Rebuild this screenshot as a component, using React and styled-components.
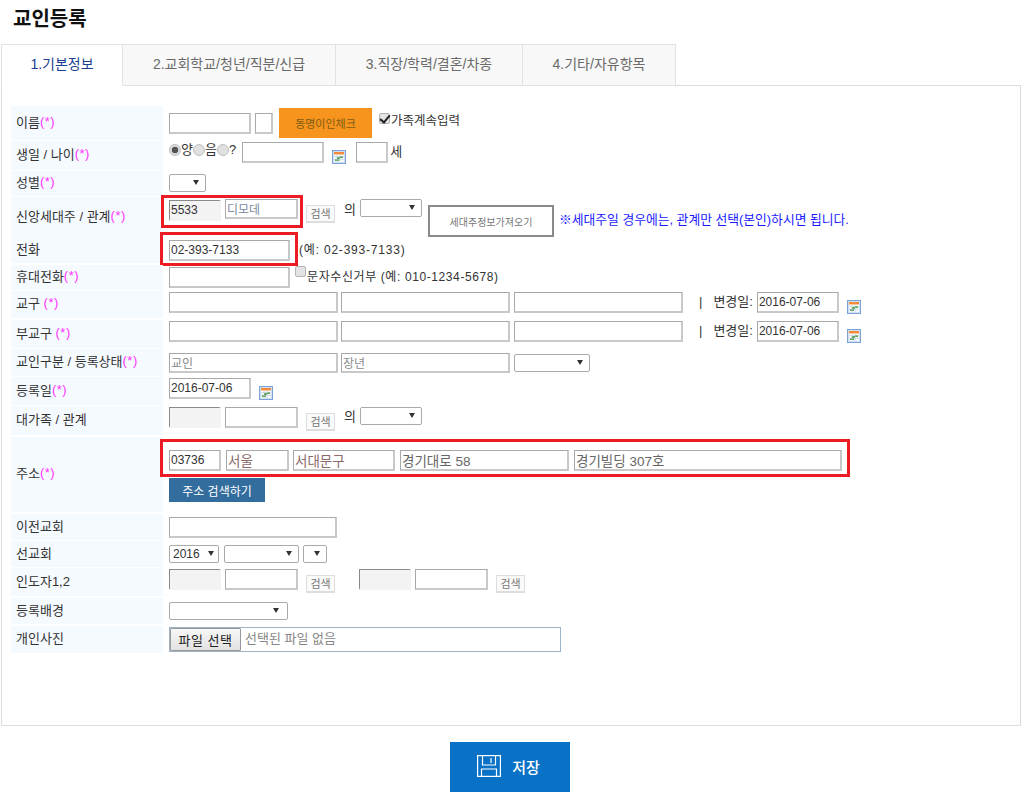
import React from "react";
import styled, { createGlobalStyle } from "styled-components";

const Global = createGlobalStyle`
  html, body { margin: 0; padding: 0; background: #fff; }
  body { font-family: "Liberation Sans", "Noto Sans CJK KR", sans-serif; font-size: 12px; color: #333; }
  * { box-sizing: border-box; }
`;

const Page = styled.div`
  width: 1024px;
  height: 797px;
  overflow: hidden;
`;
const Title = styled.h1`
  margin: 0;
  height: 44px;
  padding: 7px 0 0 13px;
  font-size: 20px;
  line-height: 24px;
  font-weight: 700;
  color: #111;
`;
const Tabs = styled.div`
  display: flex;
  height: 42px;
  padding-left: 1px;
`;
const Tab = styled.div`
  width: ${p => p.$w}px;
  height: 42px;
  border: 1px solid #e2e2e2;
  border-left-width: ${p => (p.$first ? 1 : 0)}px;
  border-bottom-color: ${p => (p.$active ? "#fff" : "#e2e2e2")};
  background: ${p => (p.$active ? "#fff" : "#f8f8f8")};
  color: ${p => (p.$active ? "#1a3f8f" : "#6a6a6a")};
  font-size: 14px;
  line-height: 39px;
  text-align: center;
  position: relative;
  z-index: 1;
`;
const Panel = styled.div`
  width: 1020px;
  height: 641px;
  margin: -1px 0 0 1px;
  border: 1px solid #dcdcdc;
  padding: 20px 0 0 9px;
`;
const Form = styled.div`
  display: flex;
  flex-direction: column;
`;
const Row = styled.div`
  position: relative;
  display: grid;
  grid-template-columns: 152px 1fr;
  height: ${p => p.$h}px;
  margin-bottom: ${p => p.$gap ?? 1}px;
`;
const Label = styled.div`
  background: #f5faff;
  padding: 0 0 4px 5px;
  display: flex;
  align-items: center;
  font-size: 13px;
  color: #333;
  white-space: pre;
`;
const Star = styled.span`
  color: #ff33ff;
  letter-spacing: 0.5px;
`;
const Value = styled.div`
  display: flex;
  align-items: flex-start;
  padding: ${p => p.$top}px 0 0 6px;
  white-space: nowrap;
`;
const Stack = styled.div`
  display: flex;
  flex-direction: column;
  align-items: flex-start;
  padding: ${p => p.$top}px 0 0 6px;
`;
const Line = styled.div`
  display: flex;
  align-items: flex-start;
`;
const Field = styled.input.attrs({ type: "text", readOnly: true })`
  width: ${p => p.$w}px;
  height: ${p => p.$h ?? 21}px;
  margin: ${p => p.$mt ?? 0}px 0 0 ${p => p.$ml ?? 0}px;
  padding: 0 2px 1px 1px;
  border: 1px solid #a8a8a8;
  border-bottom: 2px solid #c8c8c8;
  border-right: 2px solid #c8c8c8;
  background: ${p => (p.$gray ? "#f3f3f3" : "#fff")};
  border-top-color: ${p => (p.$gray ? "#8a8a8a" : "#a8a8a8")};
  border-left-color: ${p => (p.$gray ? "#8a8a8a" : "#a8a8a8")};
  ${p => (p.$gray ? "border-bottom-color:#f3f3f3;border-right-color:#f3f3f3;" : "")}
  color: ${p => p.$color ?? "#333"};
  font: ${p => p.$size ?? 12}px/1 "Liberation Sans", "Noto Sans CJK KR", sans-serif;
  outline: none;
`;
const SelectWrap = styled.div`
  position: relative;
  width: ${p => p.$w}px;
  height: 18px;
  margin: ${p => p.$mt ?? 0}px 0 0 ${p => p.$ml ?? 0}px;
  &::after {
    content: "";
    position: absolute;
    right: ${p => p.$ar ?? 7}px;
    top: 6px;
    border-left: 3px solid transparent;
    border-right: 3px solid transparent;
    border-top: 5px solid #333;
    pointer-events: none;
  }
`;
const SelectBox = styled.select`
  appearance: none;
  display: block;
  width: 100%;
  height: 100%;
  padding: 0 0 0 3px;
  border: 1px solid #aaa;
  border-radius: 2px;
  background: #fff;
  color: #333;
  font: 12px "Liberation Sans", "Noto Sans CJK KR", sans-serif;
`;
const Select = ({ w, mt, ml, ar, children }) => (
  <SelectWrap $w={w} $mt={mt} $ml={ml} $ar={ar}>
    <SelectBox defaultValue={children}>{children && <option>{children}</option>}</SelectBox>
  </SelectWrap>
);
const SearchBtn = styled.button`
  width: 29px;
  height: 18px;
  margin: ${p => p.$mt ?? 6}px 0 0 ${p => p.$ml ?? 8}px;
  padding: 0;
  border: 1px solid #ddd;
  border-bottom-width: 2px;
  background: #fafafa;
  color: #777;
  font: 11px/14px "Liberation Sans", "Noto Sans CJK KR", sans-serif;
`;
const OrangeBtn = styled.button`
  width: 93px;
  height: 30px;
  margin: -5px 0 0 6px;
  padding: 0;
  border: 0;
  background: #f7941d;
  color: #7d5c14;
  font: 11px "Liberation Sans", "Noto Sans CJK KR", sans-serif;
`;
const OutlineBtn = styled.button`
  width: 126px;
  height: 32px;
  margin: 5px 0 0 6px;
  padding: 0;
  border: 2px solid #8a8a8a;
  background: #fff;
  color: #777;
  font: 10px "Liberation Sans", "Noto Sans CJK KR", sans-serif;
`;
const AddressBtn = styled.button`
  width: 96px;
  height: 24px;
  margin-top: 7px;
  padding: 0;
  border: 0;
  background: #336d9e;
  color: #fff;
  font: 12px "Liberation Sans", "Noto Sans CJK KR", sans-serif;
`;
const Check = styled.input.attrs({ type: "checkbox", readOnly: true })`
  appearance: none;
  position: relative;
  width: 11px;
  height: 11px;
  margin: ${p => p.$mt ?? 0}px 1px 0 ${p => p.$ml ?? 0}px;
  border: 1px solid #b4b4b4;
  border-radius: 2px;
  background: #e4e4e4;
  flex: none;
  &:checked::after {
    content: "";
    position: absolute;
    left: 2px;
    top: -1px;
    width: 4px;
    height: 8px;
    border: solid #222;
    border-width: 0 2px 2px 0;
    transform: rotate(40deg);
  }
`;
const Radio = styled.input.attrs({ type: "radio", readOnly: true })`
  appearance: none;
  width: 12px;
  height: 12px;
  margin: 2px 0 0 0;
  border: 1px solid #c0c0c0;
  border-radius: 50%;
  background: #e0e0e0;
  flex: none;
  &:checked {
    background: radial-gradient(circle, #555 0 3px, #dcdcdc 3.6px);
  }
`;
const Text = styled.span`
  margin: ${p => p.$mt ?? 0}px 0 0 ${p => p.$ml ?? 0}px;
  color: ${p => p.$color ?? "#333"};
  font-size: ${p => p.$size ?? 13}px;
  letter-spacing: ${p => p.$ls ?? 0}px;
  line-height: 16px;
`;
const Mark = styled.div`
  position: absolute;
  left: ${p => p.$x}px;
  top: ${p => p.$y}px;
  width: ${p => p.$w}px;
  height: ${p => p.$h}px;
  border: 3px solid #ed1c24;
  pointer-events: none;
`;
const CalSvg = styled.svg`
  flex: none;
  margin: ${p => p.$mt ?? 8}px 0 0 ${p => p.$ml ?? 8}px;
`;
const Cal = ({ mt, ml }) => (
  <CalSvg $mt={mt} $ml={ml} width="14" height="14" viewBox="0 0 14 14">
    <rect x="0.5" y="0.5" width="13" height="13" fill="#cfe0f5" stroke="#7da2d6" />
    <rect x="2" y="2" width="10" height="2" fill="#f58a3c" />
    <rect x="2" y="4" width="10" height="1" fill="#f9c9a0" />
    <rect x="2" y="5" width="10" height="7" fill="#f4f7fb" />
    <rect x="5" y="7" width="3" height="2" fill="#5fa84f" />
    <rect x="8" y="6" width="3" height="2" fill="#5fa84f" />
    <rect x="3" y="9" width="4" height="2" fill="#5fa84f" />
    <path d="M2 6.5h10M2 9.5h10M5 5v7M8 5v7" stroke="#b5c6dc" strokeWidth="0.5" fill="none" />
  </CalSvg>
);
const FileBox = styled.div`
  display: flex;
  align-items: stretch;
  width: 392px;
  height: 25px;
  border: 1px solid #9db3c9;
  background: #fff;
`;
const FileBtn = styled.button`
  width: 71px;
  padding: 0;
  border: 1px solid #999;
  border-radius: 1px;
  background: linear-gradient(#f7f7f7, #e2e2e2);
  color: #222;
  font: 13px "Liberation Sans", "Noto Sans CJK KR", sans-serif;
  letter-spacing: 0.5px;
`;
const FileName = styled.span`
  margin-left: 4px;
  color: #888;
  font-size: 13px;
  line-height: 22px;
`;
const Footer = styled.div`
  display: flex;
  justify-content: center;
  padding: 16px 0 0 0;
  width: 1020px;
`;
const SaveBtn = styled.button`
  display: flex;
  align-items: center;
  justify-content: center;
  gap: 11px;
  width: 120px;
  height: 50px;
  padding: 0 3px 2px 0;
  border: 0;
  background: #0a72c6;
  color: #fff;
  font: 500 15px "Liberation Sans", "Noto Sans CJK KR", sans-serif;
`;

const Req = ({ children, space }) => (
  <Label>
    {children}
    {space ? " " : ""}
    <Star>(*)</Star>
  </Label>
);

const ChangeDate = () => (
  <>
    <Text $ml={16} $mt={2}>|</Text>
    <Text $ml={11} $mt={2}>변경일:</Text>
    <Field $w={82} $ml={4} value="2016-07-06" />
    <Cal />
  </>
);

export default function App() {
  return (
    <Page>
      <Global />
      <Title>교인등록</Title>
      <Tabs>
        <Tab $w={122} $first $active>1.기본정보</Tab>
        <Tab $w={213}>2.교회학교/청년/직분/신급</Tab>
        <Tab $w={187}>3.직장/학력/결혼/차종</Tab>
        <Tab $w={153}>4.기타/자유항목</Tab>
      </Tabs>
      <Panel>
        <Form>
          <Row $h={34}>
            <Req>이름</Req>
            <Value $top={7}>
              <Field $w={82} />
              <Field $w={18} $ml={4} />
              <OrangeBtn>동명이인체크</OrangeBtn>
              <Check $ml={7} defaultChecked />
              <Text $size={12.5}>가족계속입력</Text>
            </Value>
          </Row>
          <Row $h={29} $gap={1}>
            <Req>생일 / 나이</Req>
            <Value $top={1}>
              <Radio defaultChecked name="cal" />
              <Text>양</Text>
              <Radio name="cal" />
              <Text>음</Text>
              <Radio name="cal" />
              <Text>?</Text>
              <Field $w={82} $ml={6} />
              <Cal />
              <Field $w={32} $ml={10} />
              <Text $ml={2} $mt={2}>세</Text>
            </Value>
          </Row>
          <Row $h={25} $gap={1}>
            <Req>성별</Req>
            <Value $top={3}>
              <Select w={37} />
            </Value>
          </Row>
          <Row $h={39} $gap={1}>
            <Req>신앙세대주 / 관계</Req>
            <Value $top={3}>
              <Field $w={52} $gray value="5533" />
              <Field $w={73} $ml={4} $h={20} $mt={-1} $color="#7a8aa0" value="디모데" />
              <SearchBtn $mt={5}>검색</SearchBtn>
              <Text $ml={9} $mt={2}>의</Text>
              <Select w={62} ml={4} mt={-1} />
              <OutlineBtn>세대주정보가져오기</OutlineBtn>
              <Text $ml={5} $mt={12} $size={12.8} $color="#1a1aff">※세대주일 경우에는, 관계만 선택(본인)하시면 됩니다.</Text>
            </Value>
            <Mark $x={150} $y={-2} $w={142} $h={33} />
          </Row>
          <Row $h={26} $gap={2}>
            <Label>전화</Label>
            <Value $top={3}>
              <Field $w={121} value="02-393-7133" />
              <Text $ml={9} $mt={2} $size={12} $ls={0.8}>(예: 02-393-7133)</Text>
            </Value>
            <Mark $x={149} $y={-5} $w={138} $h={34} />
          </Row>
          <Row $h={25} $gap={1}>
            <Req>휴대전화</Req>
            <Value $top={2}>
              <Field $w={121} />
              <Check $ml={5} $mt={-1} />
              <Text $mt={2} $size={12} $ls={0.6}>문자수신거부 (예: 010-1234-5678)</Text>
            </Value>
          </Row>
          <Row $h={27} $gap={2}>
            <Req space>교구</Req>
            <Value $top={1}>
              <Field $w={169} />
              <Field $w={169} $ml={3} />
              <Field $w={169} $ml={4} />
              <ChangeDate />
            </Value>
          </Row>
          <Row $h={28} $gap={1}>
            <Req space>부교구</Req>
            <Value $top={1}>
              <Field $w={169} />
              <Field $w={169} $ml={3} />
              <Field $w={169} $ml={4} />
              <ChangeDate />
            </Value>
          </Row>
          <Row $h={27} $gap={1}>
            <Req>교인구분 / 등록상태</Req>
            <Value $top={4}>
              <Field $w={169} $h={20} $color="#8a8a8a" value="교인" />
              <Field $w={169} $h={20} $ml={3} $color="#8a8a8a" value="장년" />
              <Select w={76} ml={4} mt={1} />
            </Value>
          </Row>
          <Row $h={28} $gap={1}>
            <Req>등록일</Req>
            <Value $top={1}>
              <Field $w={82} value="2016-07-06" />
              <Cal />
            </Value>
          </Row>
          <Row $h={29} $gap={2}>
            <Label>대가족 / 관계</Label>
            <Value $top={1}>
              <Field $w={52} $gray />
              <Field $w={73} $ml={4} />
              <SearchBtn>검색</SearchBtn>
              <Text $ml={9} $mt={2}>의</Text>
              <Select w={62} ml={4} />
            </Value>
          </Row>
          <Row $h={75} $gap={2}>
            <Req>주소</Req>
            <Stack $top={13}>
              <Line>
                <Field $w={52} value="03736" />
                <Field $w={63} $ml={5} $size={13.5} $color="#8a6a6a" value="서울" />
                <Field $w={102} $ml={4} $size={13.5} $color="#8a6a6a" value="서대문구" />
                <Field $w={169} $ml={5} $size={13.5} $color="#666" value="경기대로 58" />
                <Field $w={268} $ml={5} $size={13.5} $color="#666" value="경기빌딩 307호" />
              </Line>
              <AddressBtn>주소 검색하기</AddressBtn>
            </Stack>
            <Mark $x={149} $y={2} $w={690} $h={38} />
          </Row>
          <Row $h={26} $gap={1}>
            <Label>이전교회</Label>
            <Value $top={3}>
              <Field $w={168} />
            </Value>
          </Row>
          <Row $h={26} $gap={1}>
            <Label>선교회</Label>
            <Value $top={4}>
              <Select w={50} ar={5}>2016</Select>
              <Select w={75} ml={5} />
              <Select w={24} ml={4} ar={7} />
            </Value>
          </Row>
          <Row $h={28} $gap={2}>
            <Label>인도자1,2</Label>
            <Value $top={1}>
              <Field $w={52} $gray />
              <Field $w={73} $ml={4} />
              <SearchBtn>검색</SearchBtn>
              <Field $w={52} $ml={24} $gray />
              <Field $w={73} $ml={4} />
              <SearchBtn>검색</SearchBtn>
            </Value>
          </Row>
          <Row $h={26} $gap={2}>
            <Label>등록배경</Label>
            <Value $top={4}>
              <Select w={119} ar={9} />
            </Value>
          </Row>
          <Row $h={27}>
            <Label>개인사진</Label>
            <Value $top={1}>
              <FileBox>
                <FileBtn>파일 선택</FileBtn>
                <FileName>선택된 파일 없음</FileName>
              </FileBox>
            </Value>
          </Row>
        </Form>
      </Panel>
      <Footer>
        <SaveBtn>
          <svg width="24" height="22" viewBox="0 0 24 22" fill="none" stroke="#fff" strokeWidth="1.2">
            <rect x="0.6" y="0.6" width="22.8" height="20.8" />
            <path d="M5.5 1v9h13V1M14 3v5M4.5 21v-7h15v7" />
          </svg>
          저장
        </SaveBtn>
      </Footer>
    </Page>
  );
}
